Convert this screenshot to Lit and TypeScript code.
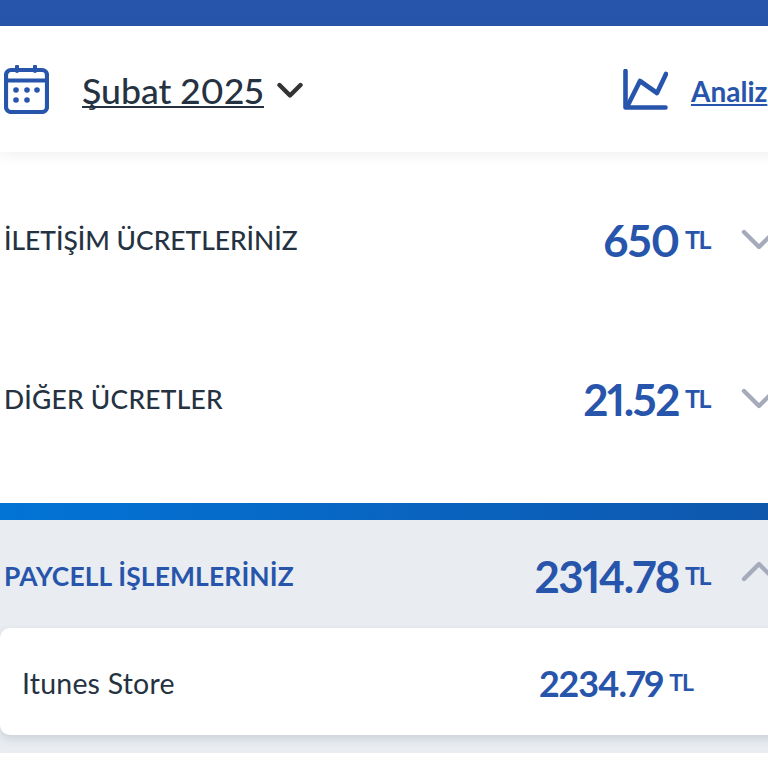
import { LitElement, html, css } from 'lit';
import { customElement } from 'lit/decorators.js';

const chevron = (up: boolean) => html`
  <svg class="chev" viewBox="0 0 36 22" width="36" height="22">
    <path d=${up ? 'M3 19 L18 4 L33 19' : 'M3 3 L18 18 L33 3'} fill="none" stroke="currentColor" stroke-width="4.4" stroke-linecap="round" stroke-linejoin="round"/>
  </svg>`;

@customElement('app-root')
export class AppRoot extends LitElement {
  static styles = css`
    :host {
      display: block;
      width: 768px;
      height: 768px;
      overflow: hidden;
      background: #fff;
      font-family: Lato, "Noto Sans", sans-serif;
      color: #253241;
    }
    .page { width: 790px; }
    .topbar { height: 26px; background: #2855ac; }
    .header {
      height: 126px;
      display: flex;
      align-items: center;
      padding-left: 4px;
      box-shadow: 0 2px 14px rgba(30, 40, 60, 0.08);
      position: relative;
    }
    .cal { display: block; margin-right: 33px; }
    .month {
      font-size: 35.6px;
      line-height: 40px;
      font-weight: 500;
      font-variant-numeric: proportional-nums;
      border-bottom: 2.5px solid #253241;
      height: 35px;
      margin-top: 1px;
    }
    .down { margin-left: 13px; color: #333; margin-top: 3px; display: block; }
    .chart { margin-left: auto; display: block; }
    .analiz {
      margin-left: 23px;
      margin-top: 3px;
      width: 99px;
      font-size: 28px;
      line-height: 32px;
      font-weight: 700;
      color: #2855ac;
      text-decoration: underline;
      text-decoration-thickness: 2px;
      text-underline-offset: 2px;
      white-space: nowrap;
    }
    .row {
      height: 142px;
      display: flex;
      align-items: center;
      padding-left: 4px;
    }
    .row.first { height: 176px; }
    .spacer { height: 33px; }
    .label { font-size: 26.4px; font-weight: 500; white-space: nowrap; }
    .label.wide { letter-spacing: 0.25px; }
    .sum {
      margin-left: auto;
      display: flex;
      align-items: center;
      color: #2855ac;
      font-weight: 700;
      font-variant-numeric: proportional-nums;
    }
    .sum b { font-size: 44px; line-height: 50px; font-weight: 700; letter-spacing: -1px; }
    .sum b.tight { letter-spacing: -1.5px; }
    .sum span { font-size: 25px; margin-left: 6px; margin-bottom: 3px; letter-spacing: -1.5px; }
    .chev { display: block; margin-left: 31px; margin-right: 13px; color: #a5abbb; flex: none; }
    .bar {
      height: 17px;
      background: linear-gradient(90deg, #0274d6, #0f56ac);
    }
    .section { background: #e9edf2; height: 233px; }
    .section-head {
      box-sizing: border-box;
      height: 108px;
      display: flex;
      align-items: center;
      padding: 4px 0 0 4px;
    }
    .section-head .label { color: #2855ac; font-weight: 700; letter-spacing: 0.15px; }
    .section-head .chev { margin-bottom: 10px; }
    .card {
      box-sizing: border-box;
      background: #fff;
      height: 107px;
      border-radius: 10px;
      box-shadow: 0 4px 10px rgba(30, 40, 60, 0.14);
      display: flex;
      align-items: center;
      padding: 3px 0 0 22px;
    }
    .store { font-size: 28.5px; letter-spacing: 0.2px; }
    .card .sum { margin-right: 97px; }
    .card .sum b { font-size: 36px; line-height: 44px; }
    .card .sum span { font-size: 23px; margin-left: 6px; letter-spacing: -1px; }
  `;

  render() {
    return html`
      <div class="page">
        <div class="topbar"></div>
        <div class="header">
          <svg class="cal" viewBox="0 0 45 49" width="45" height="49">
            <rect x="2" y="5" width="41" height="42" rx="5" fill="none" stroke="#2855ac" stroke-width="4.2"/>
            <path d="M2 15.500 H43" stroke="#2855ac" stroke-width="4"/>
            <path d="M13 1.500 V6 M31 1.500 V6" stroke="#2855ac" stroke-width="4" stroke-linecap="round"/>
            <g fill="#2855ac">
              <circle cx="12" cy="25" r="2.800"/><circle cx="23" cy="25" r="2.800"/><circle cx="33" cy="25" r="2.800"/>
              <circle cx="12" cy="35" r="2.800"/><circle cx="23" cy="35" r="2.800"/>
            </g>
          </svg>
          <div class="month">Şubat 2025</div>
          <svg class="down" viewBox="0 0 26 18" width="26" height="18">
            <path d="M2.500 3 L13 13.500 L23.500 3" fill="none" stroke="currentColor" stroke-width="4.400" stroke-linecap="round" stroke-linejoin="round"/>
          </svg>
          <svg class="chart" viewBox="0 0 45 41" width="45" height="41">
            <path d="M2.500 2 V38.500 H42.500" fill="none" stroke="#2855ac" stroke-width="4.600" stroke-linecap="round" stroke-linejoin="round"/>
            <path d="M5 36 L17 12 L34 24 L43 5" fill="none" stroke="#2855ac" stroke-width="4.600" stroke-linecap="round" stroke-linejoin="round"/>
          </svg>
          <div class="analiz">Analiz</div>
        </div>
        <div class="row first">
          <div class="label">İLETİŞİM ÜCRETLERİNİZ</div>
          <div class="sum"><b>650</b><span>TL</span></div>
          ${chevron(false)}
        </div>
        <div class="row">
          <div class="label wide">DİĞER ÜCRETLER</div>
          <div class="sum"><b class="tight">21.52</b><span>TL</span></div>
          ${chevron(false)}
        </div>
        <div class="spacer"></div>
        <div class="bar"></div>
        <div class="section">
          <div class="section-head">
            <div class="label">PAYCELL İŞLEMLERİNİZ</div>
            <div class="sum"><b class="tight">2314.78</b><span>TL</span></div>
            ${chevron(true)}
          </div>
          <div class="card">
            <div class="store">Itunes Store</div>
            <div class="sum"><b>2234.79</b><span>TL</span></div>
          </div>
        </div>
      </div>
    `;
  }
}
